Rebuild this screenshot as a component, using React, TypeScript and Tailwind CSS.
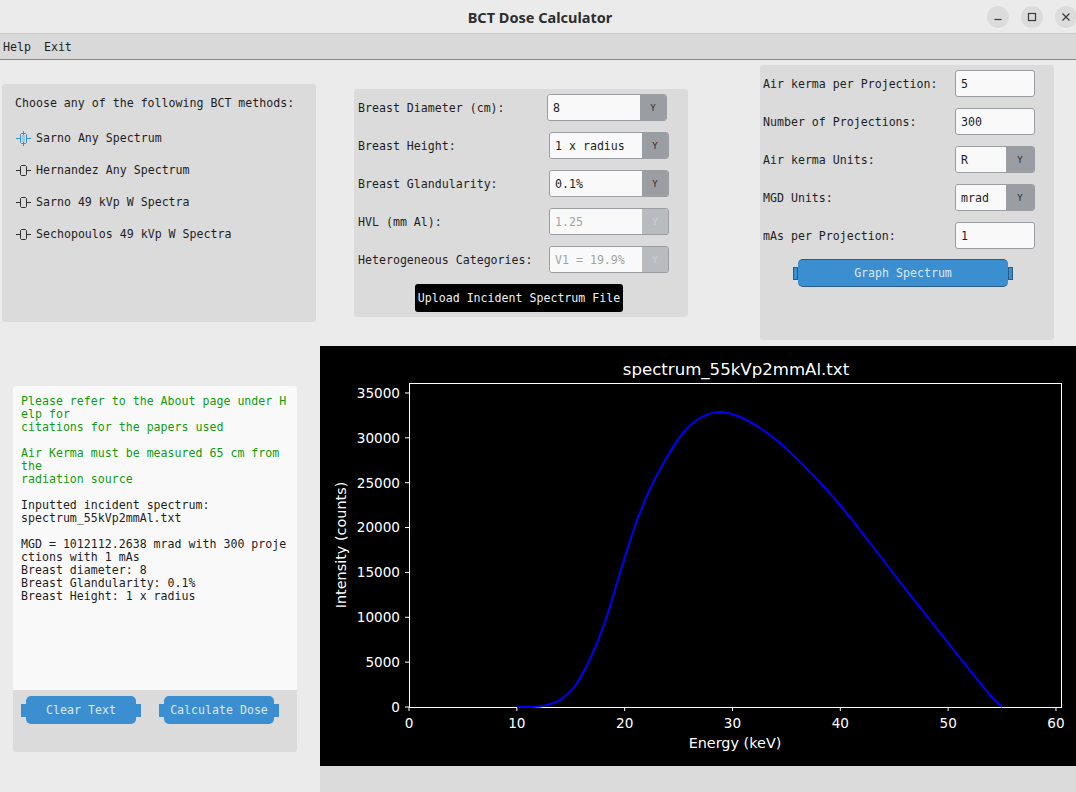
import React from "react";

const UI = "font-['DejaVu_Sans_Mono','Liberation_Mono',monospace] text-[11.6px] leading-[14px] text-[#1e1e1e]";

// curve traced in screen pixels, shifted into the chart box (320, 346)
const curve: [number, number][] = [
  [517, 707], [530, 707], [540, 706.5], [550, 704], [560, 700], [575, 686],
  [590, 659], [605, 622], [620, 573], [635, 526], [650, 489], [667, 457],
  [683, 433], [700, 418], [720, 412], [740, 417], [760, 428], [780, 443],
  [810, 472], [840, 505], [870, 543], [900, 582], [930, 620], [960, 658],
  [990, 695], [1002, 707],
];

// catmull-rom through the traced points, so the line stays smooth
function smoothPath(pts: [number, number][]) {
  const p = pts.map(([x, y]) => [x - 320, y - 346]);
  let d = `M${p[0][0]},${p[0][1]}`;
  for (let i = 0; i < p.length - 1; i++) {
    const p0 = p[i - 1] || p[i];
    const p1 = p[i];
    const p2 = p[i + 1];
    const p3 = p[i + 2] || p2;
    const c1x = p1[0] + (p2[0] - p0[0]) / 6;
    const c1y = p1[1] + (p2[1] - p0[1]) / 6;
    const c2x = p2[0] - (p3[0] - p1[0]) / 6;
    const c2y = p2[1] - (p3[1] - p1[1]) / 6;
    d += ` C${c1x},${c1y} ${c2x},${c2y} ${p2[0]},${p2[1]}`;
  }
  return d;
}

const yTicks = [0, 5000, 10000, 15000, 20000, 25000, 30000, 35000];
const xTicks = [0, 10, 20, 30, 40, 50, 60];

const logLines: { text: string; green?: boolean }[] = [
  { text: "Please refer to the About page under H", green: true },
  { text: "elp for", green: true },
  { text: "citations for the papers used", green: true },
  { text: "" },
  { text: "Air Kerma must be measured 65 cm from", green: true },
  { text: "the", green: true },
  { text: "radiation source", green: true },
  { text: "" },
  { text: "Inputted incident spectrum:" },
  { text: "spectrum_55kVp2mmAl.txt" },
  { text: "" },
  { text: "MGD = 1012112.2638 mrad with 300 proje" },
  { text: "ctions with 1 mAs" },
  { text: "Breast diameter: 8" },
  { text: "Breast Glandularity: 0.1%" },
  { text: "Breast Height: 1 x radius" },
];

function RadioMark({ on }: { on?: boolean }) {
  const c = on ? "#3b8ed0" : "#2e2e2e";
  return (
    <svg width="15" height="16" viewBox="0 0 15 16" className="shrink-0">
      <path d="M0 8.5h4.5M10.5 8.5h4.5" stroke={c} strokeWidth="1" />
      <path d="M5.5 3.5h4l1 1v8l-1 1h-4l-1-1v-8z" fill="none" stroke={c} strokeWidth="1" />
      {on && <path d="M7.5 1v15" stroke={c} strokeWidth="1" />}
      {on && <rect x="6" y="5" width="3" height="7" fill="#9cc6ea" />}
    </svg>
  );
}

function Combo({
  value,
  disabled,
  small,
}: {
  value: string;
  disabled?: boolean;
  small?: boolean;
}) {
  return (
    <div
      className={
        "flex h-[27px] rounded-[3px] overflow-hidden border border-[#9a9da2] " +
        (small ? "w-[80px]" : "w-[120px]")
      }
    >
      <div
        className={
          "flex-1 bg-[#f9f9f9] flex items-center pl-[5px] " +
          (disabled ? "text-[#a3a3a3]" : "")
        }
      >
        {value}
      </div>
      <div
        className={
          "flex items-center justify-center text-[9px] " +
          (small ? "w-[28px] " : "w-[26px] ") +
          (disabled ? "bg-[#b9bcbf] text-[#cfd1d3]" : "bg-[#9a9da2] text-[#2a2a2a]")
        }
      >
        Y
      </div>
    </div>
  );
}

function Entry({ value }: { value: string }) {
  return (
    <div className="w-[80px] h-[27px] rounded-[3px] border border-[#9a9da2] bg-[#f9f9f9] flex items-center pl-[5px]">
      {value}
    </div>
  );
}

function BlueButton({
  label,
  w,
  bordered,
}: {
  label: string;
  w: string;
  bordered?: boolean;
}) {
  const edge = bordered ? "border border-[#2b5c86]" : "";
  return (
    <div className={"flex items-center " + w}>
      <div className={"w-[5px] h-[13px] bg-[#3b8ed0] " + edge} />
      <div
        className={
          "flex-1 h-[28px] rounded-[5px] bg-[#3b8ed0] flex items-center justify-center text-[#dbe9f6] " +
          (bordered ? "border-y border-[#2b5c86]" : "")
        }
      >
        {label}
      </div>
      <div className={"w-[5px] h-[13px] bg-[#3b8ed0] " + edge} />
    </div>
  );
}

function SpectrumChart() {
  const X = (e: number) => 89 + e * 10.783;
  const Y = (v: number) => 361 - (v / 5000) * 44.86;
  return (
    <svg width="756" height="420" viewBox="0 0 756 420" className="block bg-black">
      <g fontFamily="'DejaVu Sans', 'Liberation Sans', sans-serif" fill="#ffffff">
        <text x="416" y="29" fontSize="16.6" textAnchor="middle">
          spectrum_55kVp2mmAl.txt
        </text>
        {yTicks.map((v) => (
          <g key={v}>
            <line x1="85" x2="89" y1={Y(v)} y2={Y(v)} stroke="#fff" strokeWidth="1" />
            <text x="80" y={Y(v) + 4.8} fontSize="13.6" textAnchor="end">
              {v}
            </text>
          </g>
        ))}
        {xTicks.map((e) => (
          <g key={e}>
            <line x1={X(e)} x2={X(e)} y1="361" y2="365" stroke="#fff" strokeWidth="1" />
            <text x={X(e)} y="382" fontSize="13.6" textAnchor="middle">
              {e}
            </text>
          </g>
        ))}
        <text x="415" y="402" fontSize="14.4" textAnchor="middle">
          Energy (keV)
        </text>
        <text
          x="21"
          y="199"
          fontSize="14.4"
          textAnchor="middle"
          dominantBaseline="central"
          transform="rotate(-90 21 199)"
        >
          Intensity (counts)
        </text>
      </g>
      <rect x="89.5" y="37.5" width="652" height="324" fill="none" stroke="#fff" strokeWidth="1" />
      <path d={smoothPath(curve)} fill="none" stroke="#0000ff" strokeWidth="2" strokeLinejoin="round" />
    </svg>
  );
}

export default function App() {
  return (
    <div className={"w-[1076px] h-[792px] overflow-hidden bg-[#ebebeb] flex flex-col " + UI}>
      {/* window title bar */}
      <div className="h-[33px] shrink-0 grid grid-cols-[1fr_auto_1fr] items-center">
        <div />
        <div className="font-['Noto_Sans',sans-serif] font-bold text-[14.5px] text-[#2e2e2e] pl-[4px]">
          BCT Dose Calculator
        </div>
        <div className="flex justify-end gap-[12px] mr-[-1px]">
          <div className="w-[22px] h-[22px] rounded-full bg-[#dcdcdc] flex items-center justify-center">
            <svg width="10" height="10" viewBox="0 0 10 10">
              <path d="M1.5 7.5h7" stroke="#3a3a3a" strokeWidth="1.2" />
            </svg>
          </div>
          <div className="w-[22px] h-[22px] rounded-full bg-[#dcdcdc] flex items-center justify-center">
            <svg width="10" height="10" viewBox="0 0 10 10">
              <rect x="1.5" y="1.5" width="7" height="7" fill="none" stroke="#3a3a3a" strokeWidth="1.2" />
            </svg>
          </div>
          <div className="w-[22px] h-[22px] rounded-full bg-[#dcdcdc] flex items-center justify-center">
            <svg width="10" height="10" viewBox="0 0 10 10">
              <path d="M1.5 1.5l7 7M8.5 1.5l-7 7" stroke="#3a3a3a" strokeWidth="1.2" />
            </svg>
          </div>
        </div>
      </div>

      {/* menu bar */}
      <div className="h-[27px] shrink-0 bg-[#d9d9d9] border-t border-[#c9c9c9] border-b border-b-[#8a8a8a] flex items-center pl-[3px] gap-[13px]">
        <span>Help</span>
        <span>Exit</span>
      </div>

      {/* top row of option panels */}
      <div className="h-[280px] shrink-0 flex items-start">
        <div className="ml-[2px] mt-[24px] w-[314px] h-[238px] rounded-[3px] bg-[#dbdbdb] pl-[13px] pt-[12px]">
          <div>Choose any of the following BCT methods:</div>
          <div className="mt-[20px] flex flex-col gap-[16px] pl-[1px]">
            {[
              "Sarno Any Spectrum",
              "Hernandez Any Spectrum",
              "Sarno 49 kVp W Spectra",
              "Sechopoulos 49 kVp W Spectra",
            ].map((m, i) => (
              <div key={m} className="flex items-center gap-[5px]">
                <RadioMark on={i === 0} />
                <span>{m}</span>
              </div>
            ))}
          </div>
        </div>

        <div className="ml-[38px] mt-[29px] w-[334px] h-[228px] rounded-[3px] bg-[#dbdbdb] pl-[4px] pt-[5px] flex flex-col">
          {[
            { label: "Breast Diameter (cm):", value: "8", first: true },
            { label: "Breast Height:", value: "1 x radius" },
            { label: "Breast Glandularity:", value: "0.1%" },
            { label: "HVL (mm Al):", value: "1.25", disabled: true },
            { label: "Heterogeneous Categories:", value: "V1 = 19.9%", disabled: true },
          ].map((r) => (
            <div key={r.label} className="flex items-center h-[27px] mb-[11px]">
              <div className={r.first ? "w-[189px]" : "w-[191px]"}>{r.label}</div>
              <Combo value={r.value} disabled={r.disabled} />
            </div>
          ))}
          <div className="flex justify-center pr-[8px]">
            <div className="w-[208px] h-[28px] rounded-[3px] bg-black text-[#f0f0f0] flex items-center justify-center">
              Upload Incident Spectrum File
            </div>
          </div>
        </div>

        <div className="ml-[72px] mt-[5px] w-[294px] h-[275px] rounded-[3px] bg-[#dbdbdb] pl-[3px] pt-[5px] flex flex-col">
          {[
            { label: "Air kerma per Projection:", value: "5" },
            { label: "Number of Projections:", value: "300" },
            { label: "Air kerma Units:", value: "R", combo: true },
            { label: "MGD Units:", value: "mrad", combo: true },
            { label: "mAs per Projection:", value: "1" },
          ].map((r) => (
            <div key={r.label} className="flex items-center h-[27px] mb-[11px]">
              <div className="w-[192px]">{r.label}</div>
              {r.combo ? <Combo value={r.value} small /> : <Entry value={r.value} />}
            </div>
          ))}
          <div className="pl-[30px] -mt-[1px]">
            <BlueButton label="Graph Spectrum" w="w-[220px]" bordered />
          </div>
        </div>
      </div>

      {/* bottom row: log + chart */}
      <div className="flex-1 flex items-start">
        <div className="ml-[13px] mt-[46px] w-[284px] h-[366px] rounded-[3px] bg-[#dbdbdb] flex flex-col">
          <div className="h-[304px] bg-[#f9f9f9] rounded-t-[2px] pl-[8px] pt-[9px] leading-[13px] whitespace-pre">
            {logLines.map((l, i) => (
              <div key={i} className={"h-[13px] " + (l.green ? "text-[#119b11]" : "text-[#1e1e1e]")}>
                {l.text}
              </div>
            ))}
          </div>
          <div className="flex gap-[18px] pl-[8px] mt-[6px]">
            <BlueButton label="Clear Text" w="w-[120px]" />
            <BlueButton label="Calculate Dose" w="w-[120px]" />
          </div>
        </div>

        <div className="ml-[23px] mt-[6px] flex-1 h-[460px] bg-[#dbdbdb]">
          <SpectrumChart />
        </div>
      </div>
    </div>
  );
}
